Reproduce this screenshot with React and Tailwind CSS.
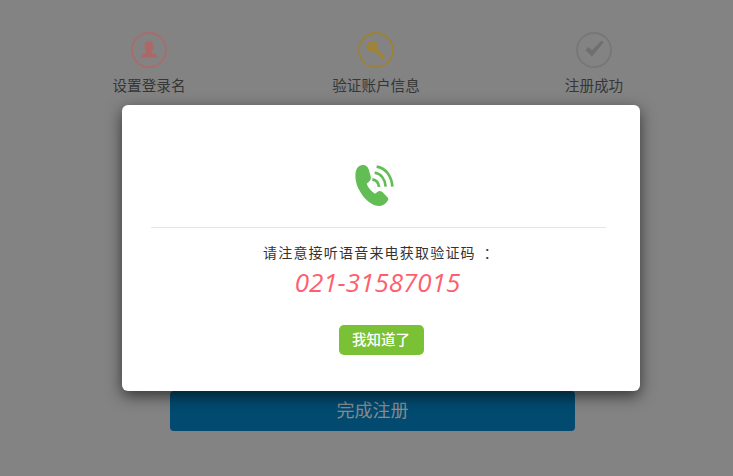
const cjk = "font-['Microsoft_YaHei','Noto_Sans_CJK_SC',sans-serif]";

function UserIcon() {
  return (
    <svg width="36" height="36" viewBox="0 0 36 36" fill="none">
      <circle cx="18" cy="18" r="17" stroke="#a86c6c" strokeWidth="1.800" />
      <ellipse cx="18" cy="14.500" rx="4.500" ry="5.500" fill="#ad6767" />
      <path d="M15.500 19c0 2-1 2.500-3 3.200-2 .8-3 1.500-3 3.300h17c0-1.800-1-2.500-3-3.300-2-.7-3-1.200-3-3.200z" fill="#ad6767" />
    </svg>
  );
}

function KeyIcon() {
  return (
    <svg width="36" height="36" viewBox="0 0 36 36" fill="none">
      <circle cx="18" cy="18" r="17" stroke="#9c8136" strokeWidth="1.800" />
      <circle cx="14" cy="14.500" r="5.500" fill="#a08433" />
      <circle cx="12.800" cy="13" r="1.500" fill="#838383" />
      <path d="M17 17.500l9 8.500" stroke="#a08433" strokeWidth="3.200" />
    </svg>
  );
}

function CheckIcon() {
  return (
    <svg width="36" height="36" viewBox="0 0 36 36" fill="none">
      <circle cx="18" cy="18" r="17" stroke="#777777" strokeWidth="1.800" />
      <path d="M9.500 18l3-3 3.500 3.300 9.500-9.800 2 2-11.500 14z" fill="#6f6f6f" />
    </svg>
  );
}

function Step({ icon, label }) {
  return (
    <div className="flex flex-col items-center">
      {icon}
      <div className="mt-[7px] text-[14.6px] leading-[20px] text-[#363636]">{label}</div>
    </div>
  );
}

function PhoneIcon() {
  return (
    <svg width="94" height="70" viewBox="12 0 282 210" fill="none">
      <path
        d="M98 45c8-1 15 4 18 13l6 21c2 7 0 12-5 16l-7 6c4 11 12 21 25 30l7-5c5-4 10-4 15 0l14 14c5 5 5 10 1 14-5 7-13 14-23 14-23 0-45-17-61-47-13-24-14-49-9-62 3-7 9-13 19-14z"
        fill="#62bd55"
      />
      <path d="M140 50c26 4 45 27 47 60" stroke="#62bd55" strokeWidth="8" />
      <path d="M134 68c18 3 31 19 33 42" stroke="#62bd55" strokeWidth="8" />
      <path d="M127 88c11 2 19 11 20 23" stroke="#62bd55" strokeWidth="8" />
    </svg>
  );
}

export default function App() {
  return (
    <div className={`relative h-[476px] w-[733px] overflow-hidden bg-[#838383] ${cjk}`}>
      {/* Steps behind the dialog */}
      <div className="ml-[33px] w-[680px] border-b border-[#9a7878] pt-[32px] pb-[10px]">
        <div className="grid grid-cols-[232px_222px_214px]">
          <Step icon={<UserIcon />} label="设置登录名" />
          <Step icon={<KeyIcon />} label="验证账户信息" />
          <Step icon={<CheckIcon />} label="注册成功" />
        </div>
      </div>

      <div className="mt-[285px] ml-[170px] flex h-[40px] w-[405px] items-center justify-center rounded-[4px] bg-[#024a70] pb-[4px] text-[18px] text-[#8b8b8b]">
        完成注册
      </div>

      {/* Dialog */}
      <div className="absolute top-[105px] left-[122px] flex h-[286px] w-[518px] flex-col items-center rounded-[6px] bg-white pt-[45px] shadow-[0_5px_15px_rgba(0,0,0,0.6)]">
        <PhoneIcon />
        <div className="mt-[7px] mr-[5px] h-px w-[455px] shrink-0 bg-[#e5e5e5]" />
        <p className="mt-[14px] text-[14px] leading-[20px] tracking-[1.2px] whitespace-nowrap text-[#333333]">
          请注意接听语音来电获取验证码<span className="ml-[8px]">：</span>
        </p>
        <p className="mt-[3px] mr-[7px] font-['Open_Sans',sans-serif] text-[26px] leading-[34px] text-[#ff5f6d] italic">
          021-31587015
        </p>
        <button className="mt-[26px] h-[30px] w-[85px] rounded-[5px] bg-[#7ac135] pb-[2px] text-[14.5px] font-medium text-white">
          我知道了
        </button>
      </div>
    </div>
  );
}
